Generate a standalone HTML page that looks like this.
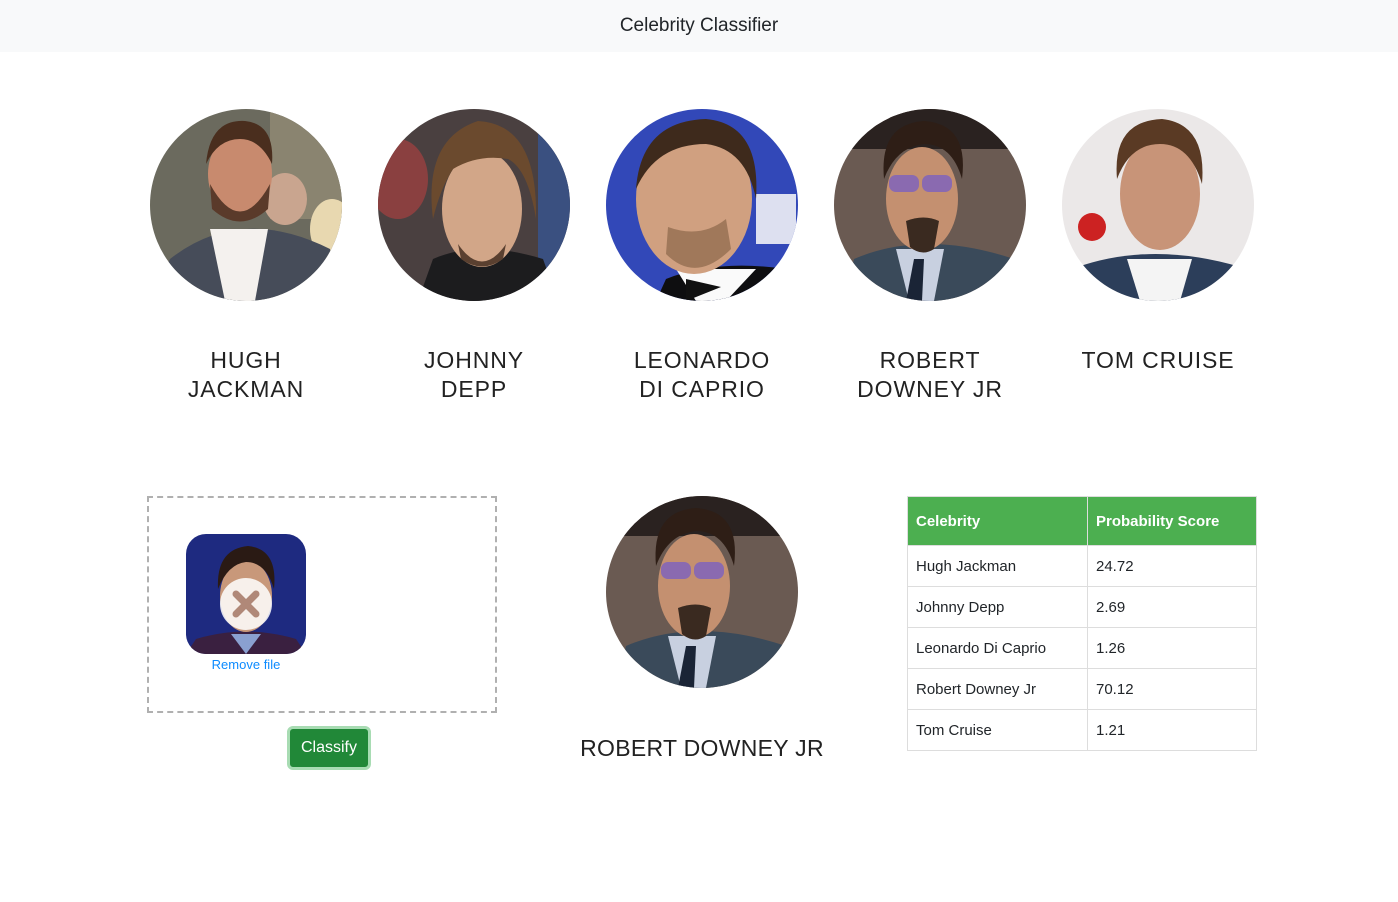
<!DOCTYPE html>
<html><head><meta charset="utf-8">
<style>
*{margin:0;padding:0;box-sizing:border-box}
body{width:1398px;height:902px;background:#fff;font-family:"Liberation Sans",sans-serif;color:#212529;position:relative;overflow:hidden}
.nav{position:absolute;left:0;top:0;width:1398px;height:52px;background:#f8f9fa;text-align:center;font-size:19px;line-height:52px;color:#212529}
.pic{position:absolute;width:192px;height:192px;border-radius:50%;overflow:hidden}
.pic svg{display:block}
.name{position:absolute;width:228px;text-align:center;font-size:23px;letter-spacing:0.9px;line-height:29px;color:#222;font-weight:500}
.drop{position:absolute;left:147px;top:496px;width:350px;height:217px;border:2px dashed #b0b0b0}
.thumb{position:absolute;left:37px;top:36px;width:120px;height:120px;border-radius:20px;overflow:hidden}
.rm{position:absolute;left:37px;top:159px;width:120px;text-align:center;font-size:13px;color:#0d8bff}
.btn{position:absolute;left:287px;top:726px;width:84px;height:44px;border-radius:6px;border:3px solid #a8dcb3;background:#218838;color:#fff;font-size:16px;text-align:center;line-height:38px}
table{position:absolute;left:907px;top:496px;border-collapse:collapse;font-size:15px}
td,th{border:1px solid #ddd;padding:0 8px;text-align:left;height:41px}
th{background:#4caf50;color:#fff;height:49px;font-weight:bold}
</style></head><body>
<div class="nav">Celebrity Classifier</div>

<div class="pic" style="left:150px;top:109px"><svg width="192" height="192" viewBox="0 0 192 192">
<rect width="192" height="192" fill="#6b6a5e"/><rect x="120" y="0" width="72" height="110" fill="#8a8470"/>
<ellipse cx="135" cy="90" rx="22" ry="26" fill="#c9a58f"/><ellipse cx="182" cy="120" rx="22" ry="30" fill="#e8d8b0"/>
<path d="M0 192 L20 150 Q90 95 180 140 L192 192Z" fill="#464c59"/>
<path d="M60 120 L75 192 L105 192 L118 120Z" fill="#f4f1ee"/>
<ellipse cx="90" cy="65" rx="32" ry="42" fill="#c88a6e"/>
<path d="M60 75 Q90 130 120 75 L118 100 Q90 125 62 100Z" fill="#5a3a2a"/>
<path d="M56 55 Q60 10 95 12 Q125 15 122 55 Q110 30 90 30 Q68 30 56 55Z" fill="#4a2e1e"/>
</svg></div>
<div class="pic" style="left:378px;top:109px"><svg width="192" height="192" viewBox="0 0 192 192">
<rect width="192" height="192" fill="#4a4040"/><ellipse cx="20" cy="70" rx="30" ry="40" fill="#8a4040"/><rect x="160" y="0" width="32" height="192" fill="#3a5080"/>
<path d="M40 192 L55 150 Q100 130 165 150 L180 192Z" fill="#1c1c1e"/>
<ellipse cx="104" cy="100" rx="40" ry="58" fill="#d2a688"/>
<path d="M80 135 Q104 170 128 135 L125 150 Q104 165 83 150Z" fill="#5a4030"/>
<path d="M55 110 Q45 30 100 12 Q160 15 158 110 Q150 60 130 50 Q100 45 75 60 Q62 80 55 110Z" fill="#6b4a2e"/>
</svg></div>
<div class="pic" style="left:606px;top:109px"><svg width="192" height="192" viewBox="0 0 192 192">
<rect width="192" height="192" fill="#3248b8"/><rect x="150" y="85" width="40" height="50" fill="#dde0f0"/>
<path d="M50 192 L60 170 Q110 150 180 160 L170 192Z" fill="#0e0e10"/>
<path d="M70 160 L90 192 L120 192 L150 160Z" fill="#fafafa"/>
<path d="M80 170 L115 178 L80 192Z" fill="#111"/>
<ellipse cx="88" cy="90" rx="58" ry="75" fill="#d0a080"/>
<path d="M60 145 Q90 175 125 140 L120 110 Q95 130 62 118Z" fill="#a0785a"/>
<path d="M30 80 Q35 12 100 10 Q155 15 150 90 Q140 40 100 35 Q50 35 30 80Z" fill="#3e2a1c"/>
</svg></div>
<div class="pic" style="left:834px;top:109px"><svg width="192" height="192" viewBox="0 0 192 192">
<rect width="192" height="192" fill="#6a5a52"/><rect x="0" y="0" width="192" height="40" fill="#2a2220"/>
<path d="M10 192 L20 150 Q90 120 180 150 L192 192Z" fill="#3a4a5a"/>
<path d="M62 140 L75 192 L100 192 L110 140Z" fill="#c8d0e0"/><path d="M80 150 L72 192 L88 192 L90 150Z" fill="#1a2436"/>
<ellipse cx="88" cy="90" rx="36" ry="52" fill="#c49070"/>
<rect x="55" y="66" width="30" height="17" rx="7" fill="#8a6ab0"/><rect x="88" y="66" width="30" height="17" rx="7" fill="#8a6ab0"/>
<path d="M72 112 Q90 105 105 112 L100 140 Q88 148 76 138Z" fill="#3a2a20"/>
<path d="M50 70 Q45 15 90 12 Q135 15 128 70 Q118 35 90 35 Q62 38 50 70Z" fill="#2e1e16"/>
</svg></div>
<div class="pic" style="left:1062px;top:109px"><svg width="192" height="192" viewBox="0 0 192 192">
<rect width="192" height="192" fill="#ebe8e8"/><circle cx="30" cy="118" r="14" fill="#c22"/>
<path d="M0 192 L10 160 Q90 130 185 160 L192 192Z" fill="#2c3e5a"/>
<path d="M65 150 L78 192 L118 192 L130 150Z" fill="#f4f4f4"/>
<ellipse cx="98" cy="85" rx="40" ry="56" fill="#c89478"/>
<path d="M55 70 Q50 12 100 10 Q145 15 140 75 Q128 35 98 35 Q68 35 55 70Z" fill="#5a3a24"/>
</svg></div>

<div class="name" style="left:132px;top:346px">HUGH<br>JACKMAN</div>
<div class="name" style="left:360px;top:346px">JOHNNY<br>DEPP</div>
<div class="name" style="left:588px;top:346px">LEONARDO<br>DI CAPRIO</div>
<div class="name" style="left:816px;top:346px">ROBERT<br>DOWNEY JR</div>
<div class="name" style="left:1044px;top:346px">TOM CRUISE</div>

<div class="drop">
<div class="thumb"><svg width="120" height="120" viewBox="0 0 120 120">
<rect width="120" height="120" fill="#1e2a80"/>
<path d="M0 120 L10 105 Q60 90 110 105 L120 120Z" fill="#3a2040"/>
<path d="M45 100 L60 120 L75 100Z" fill="#8aa0d0"/>
<ellipse cx="60" cy="62" rx="26" ry="36" fill="#c8987a"/>
<path d="M32 55 Q30 15 62 12 Q92 15 88 55 Q80 28 60 28 Q42 30 32 55Z" fill="#2a1a14"/>
<circle cx="60" cy="70" r="26" fill="#fff" fill-opacity=".85"/>
<path d="M50 60 L70 80 M70 60 L50 80" stroke="#b08878" stroke-width="7" stroke-linecap="round"/>
</svg></div>
<div class="rm">Remove file</div>
</div>
<div class="btn">Classify</div>

<div class="pic" style="left:606px;top:496px"><svg width="192" height="192" viewBox="0 0 192 192">
<rect width="192" height="192" fill="#6a5a52"/><rect x="0" y="0" width="192" height="40" fill="#2a2220"/>
<path d="M10 192 L20 150 Q90 120 180 150 L192 192Z" fill="#3a4a5a"/>
<path d="M62 140 L75 192 L100 192 L110 140Z" fill="#c8d0e0"/><path d="M80 150 L72 192 L88 192 L90 150Z" fill="#1a2436"/>
<ellipse cx="88" cy="90" rx="36" ry="52" fill="#c49070"/>
<rect x="55" y="66" width="30" height="17" rx="7" fill="#8a6ab0"/><rect x="88" y="66" width="30" height="17" rx="7" fill="#8a6ab0"/>
<path d="M72 112 Q90 105 105 112 L100 140 Q88 148 76 138Z" fill="#3a2a20"/>
<path d="M50 70 Q45 15 90 12 Q135 15 128 70 Q118 35 90 35 Q62 38 50 70Z" fill="#2e1e16"/>
</svg></div>
<div class="name" style="left:552px;top:734px;width:300px;letter-spacing:0.3px">ROBERT DOWNEY JR</div>

<table>
<tr><th style="width:180px">Celebrity</th><th style="width:169px">Probability Score</th></tr>
<tr><td>Hugh Jackman</td><td>24.72</td></tr>
<tr><td>Johnny Depp</td><td>2.69</td></tr>
<tr><td>Leonardo Di Caprio</td><td>1.26</td></tr>
<tr><td>Robert Downey Jr</td><td>70.12</td></tr>
<tr><td>Tom Cruise</td><td>1.21</td></tr>
</table>
</body></html>
